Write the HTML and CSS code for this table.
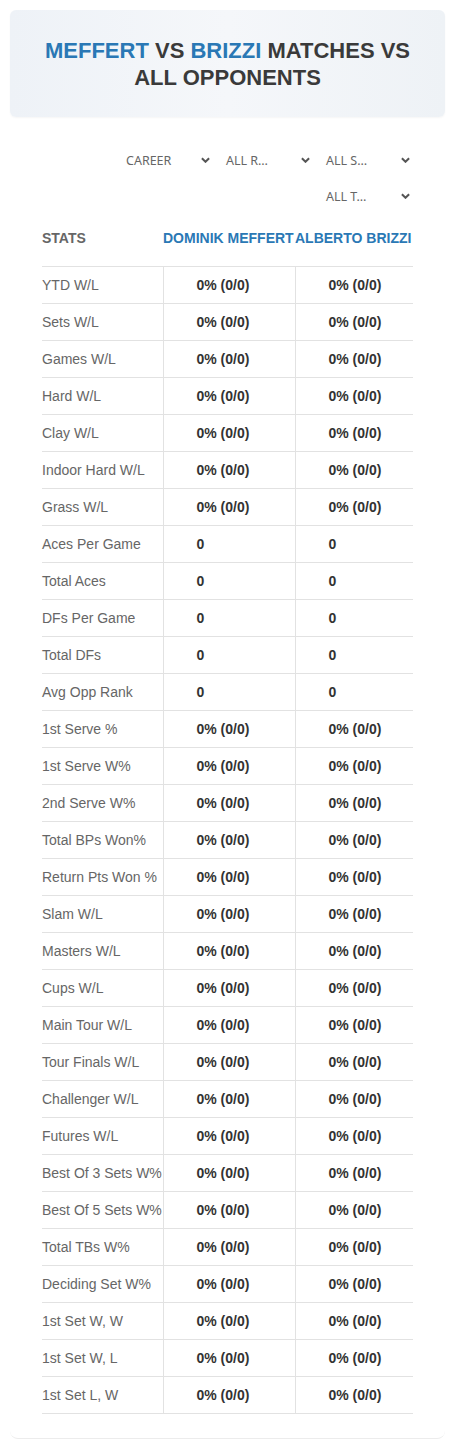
FILE: index.html
```html
<!DOCTYPE html>
<html>
<head>
<meta charset="utf-8">
<link rel="stylesheet" href="styles.css">
</head>
<body>
<div class="page">
  <div class="hero">
    <h1 class="title"><span class="blue">MEFFERT</span> VS <span class="blue">BRIZZI</span> MATCHES VS ALL OPPONENTS</h1>
  </div>
  <div class="card">
    <div class="filters">
      <div class="sel"><span>CAREER</span><svg class="chev" viewBox="0 0 10 6"><path d="M1 1 L5 5 L9 1" /></svg></div>
      <div class="sel"><span>ALL R…</span><svg class="chev" viewBox="0 0 10 6"><path d="M1 1 L5 5 L9 1" /></svg></div>
      <div class="sel"><span>ALL S…</span><svg class="chev" viewBox="0 0 10 6"><path d="M1 1 L5 5 L9 1" /></svg></div>
      <div class="sel"><span>ALL T…</span><svg class="chev" viewBox="0 0 10 6"><path d="M1 1 L5 5 L9 1" /></svg></div>
    </div>
    <table class="stats">
      <colgroup><col class="c1"><col class="c2"><col class="c3"></colgroup>
      <thead>
        <tr><th class="lab">STATS</th><th class="pl">DOMINIK MEFFERT</th><th class="pl">ALBERTO BRIZZI</th></tr>
      </thead>
      <tbody id="rows"></tbody>
    </table>
  </div>
</div>
<script>
var rows=[["YTD W/L",1],["Sets W/L",1],["Games W/L",1],["Hard W/L",1],["Clay W/L",1],["Indoor Hard W/L",1],["Grass W/L",1],["Aces Per Game",0],["Total Aces",0],["DFs Per Game",0],["Total DFs",0],["Avg Opp Rank",0],["1st Serve %",1],["1st Serve W%",1],["2nd Serve W%",1],["Total BPs Won%",1],["Return Pts Won %",1],["Slam W/L",1],["Masters W/L",1],["Cups W/L",1],["Main Tour W/L",1],["Tour Finals W/L",1],["Challenger W/L",1],["Futures W/L",1],["Best Of 3 Sets W%",1],["Best Of 5 Sets W%",1],["Total TBs W%",1],["Deciding Set W%",1],["1st Set W, W",1],["1st Set W, L",1],["1st Set L, W",1]];
var tb=document.getElementById('rows');var h='';
rows.forEach(function(r){var v=r[1]?'0% (0/0)':'0';h+='<tr><td class="lab">'+r[0]+'</td><td class="val">'+v+'</td><td class="val">'+v+'</td></tr>';});
tb.innerHTML=h;
</script>
</body>
</html>
```

FILE: styles.css
```css
* { box-sizing: border-box; }
body {
  margin: 0;
  background: #fff;
  font-family: "Liberation Sans", Arial, sans-serif;
  color: #333;
}
.page {
  padding: 10px 10px 0 10px;
}
.hero {
  height: 107px;
  border-radius: 6px;
  background: linear-gradient(90deg, #eef2f7 0%, #f5f7fa 50%, #eef2f6 100%);
  box-shadow: 0 1px 2px rgba(0,0,0,0.04);
  display: flex;
  align-items: center;
  justify-content: center;
  padding: 0 20px;
}
.title {
  margin: 0;
  font-size: 22px;
  line-height: 27px;
  font-weight: 700;
  text-align: center;
  color: #3a3a3a;
}
.blue { color: #2a78b5; }
.card {
  padding: 27px 32px 24px 32px;
  border-bottom: 1px solid #ececec;
  border-radius: 0 0 8px 8px;
}
.filters {
  display: flex;
  flex-wrap: wrap;
  justify-content: flex-end;
  gap: 4px 8px;
  width: 292px;
  margin-left: auto;
}
.sel {
  width: 92px;
  height: 32px;
  display: flex;
  align-items: center;
  justify-content: space-between;
  padding: 0 3px 0 5px;
  font-family: "Noto Sans", "Open Sans", sans-serif;
  font-size: 12.5px;
  color: #666;
}
.chev {
  width: 9px;
  height: 6px;
  fill: none;
  stroke: #555;
  stroke-width: 2.2;
}
.stats {
  width: 100%;
  border-collapse: collapse;
  margin-top: 2px;
  font-size: 14px;
}
.c1 { width: 121px; }
.c2 { width: 132px; }
.c3 { width: 118px; }
.stats th {
  text-align: left;
  font-weight: 700;
  font-size: 14px;
  height: 52px;
  padding: 0 0 4px 0;
  white-space: nowrap;
  color: #2a78b5;
  border-bottom: 1px solid #e2e2e2;
}
.stats th.lab { color: #666; }
.stats td {
  height: 37px;
  padding: 0;
  border-bottom: 1px solid #e2e2e2;
  white-space: nowrap;
}
.stats td.lab {
  color: #666;
  font-weight: 400;
}
.stats td.val {
  padding-left: 33px;
  font-weight: 700;
  color: #333;
  border-left: 1px solid #e2e2e2;
}
```
